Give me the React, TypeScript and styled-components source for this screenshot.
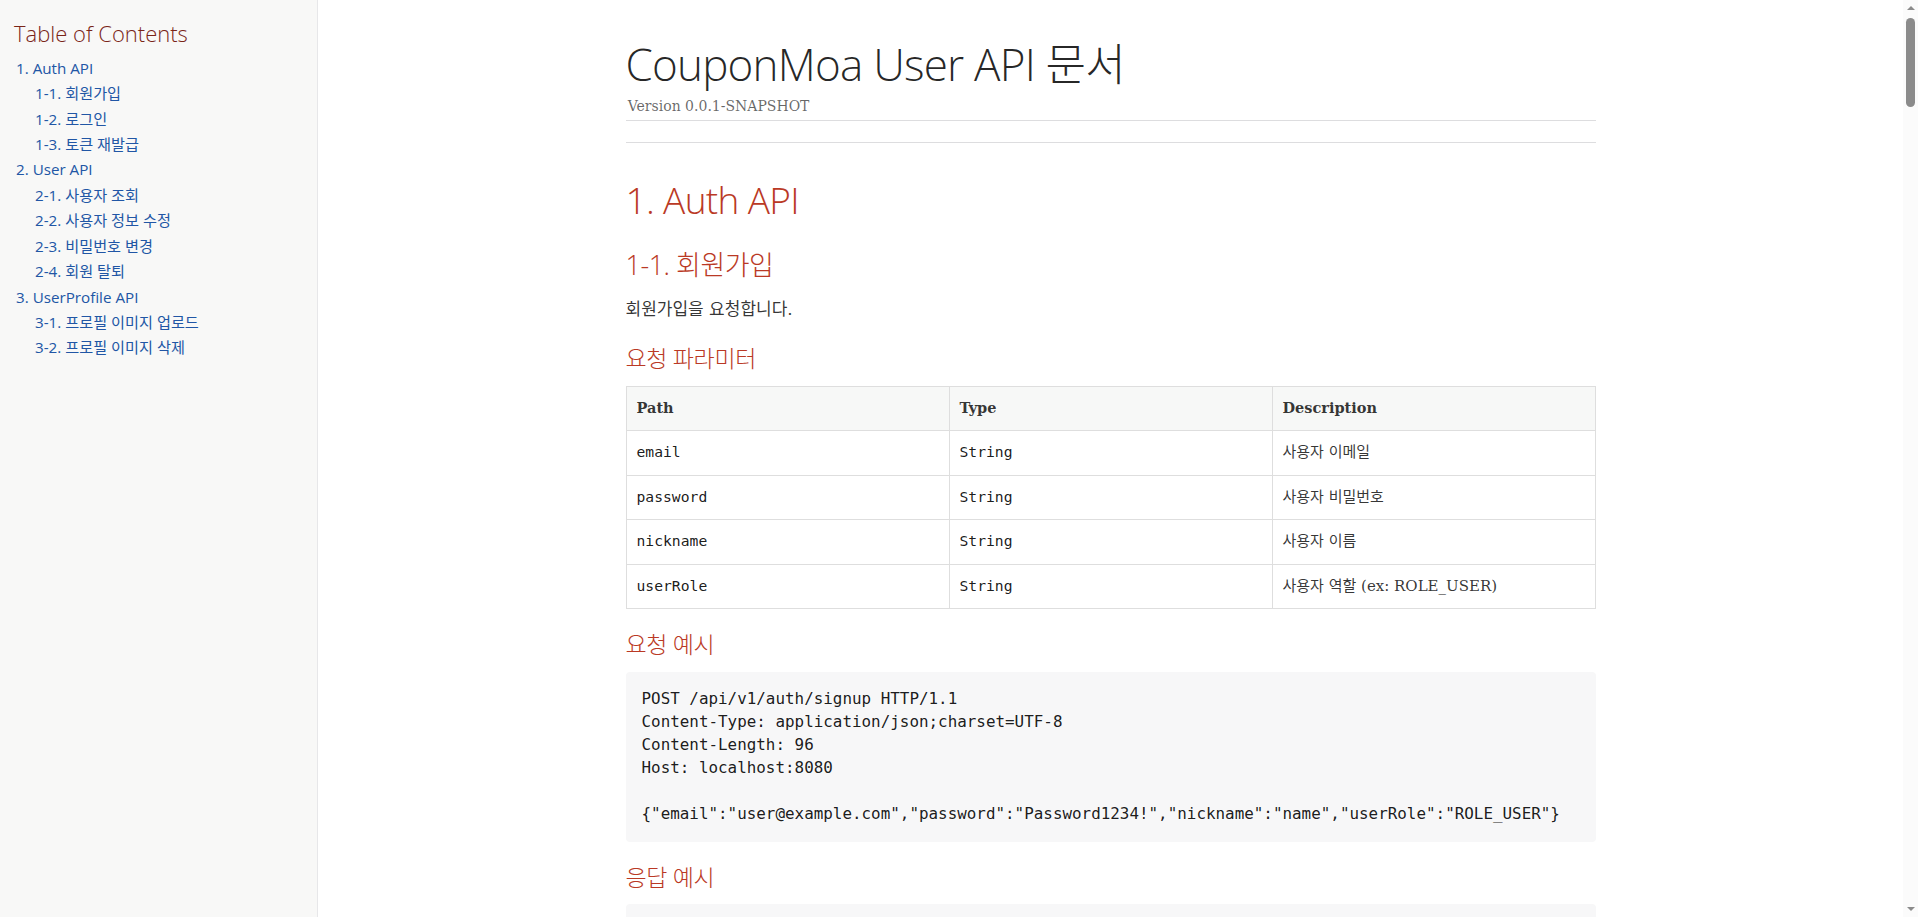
import { FC, useCallback, useEffect, useRef, useState } from 'react';
import styled, { createGlobalStyle } from 'styled-components';

const sans = `"Open Sans", "Noto Sans CJK KR", "DejaVu Sans", sans-serif`;
const serif = `"DejaVu Serif", "Noto Sans CJK KR", serif`;
const mono = `"DejaVu Sans Mono", "Noto Sans CJK KR", monospace`;

type Row = [string, string, string];

interface Sub {
    num: string;
    title: string;
    desc: string;
    params?: Row[];
    request: string;
    response: string;
    fields?: Row[];
}

interface Section {
    num: string;
    title: string;
    subs: Sub[];
}

const bytes = (s: string) => new TextEncoder().encode(s).length;

const request = (method: string, path: string, body?: string, auth = false) => {
    const lines = [`${method} ${path} HTTP/1.1`];
    if (body) {
        lines.push('Content-Type: application/json;charset=UTF-8', `Content-Length: ${bytes(body)}`);
    }
    if (auth) {
        lines.push('Authorization: Bearer eyJhbGciOiJIUzI1NiJ9.eyJzdWIiOiJ1c2VyQGV4YW1wbGUuY29tIn0.access');
    }
    lines.push('Host: localhost:8080');
    return body ? `${lines.join('\n')}\n\n${body}` : lines.join('\n');
};

const response = (body: string) =>
    `HTTP/1.1 200 OK\nContent-Type: application/json\nContent-Length: ${bytes(body)}\n\n${body}`;

const baseFields: Row[] = [
    ['code', 'Number', '응답 코드'],
    ['message', 'String', '응답 메시지'],
];

const userFields: Row[] = [
    ...baseFields,
    ['data.id', 'Number', '사용자 ID'],
    ['data.email', 'String', '사용자 이메일'],
    ['data.nickname', 'String', '사용자 이름'],
    ['data.userRole', 'String', '사용자 역할'],
    ['data.profileImageUrl', 'String', '프로필 이미지 URL'],
];

const userJson =
    '{"code":200,"message":"OK","data":{"id":1,"email":"user@example.com","nickname":"name","userRole":"ROLE_USER","profileImageUrl":null}}';

const sections: Section[] = [
    {
        num: '1',
        title: 'Auth API',
        subs: [
            {
                num: '1-1',
                title: '회원가입',
                desc: '회원가입을 요청합니다.',
                params: [
                    ['email', 'String', '사용자 이메일'],
                    ['password', 'String', '사용자 비밀번호'],
                    ['nickname', 'String', '사용자 이름'],
                    ['userRole', 'String', '사용자 역할 (ex: ROLE_USER)'],
                ],
                request: request(
                    'POST',
                    '/api/v1/auth/signup',
                    '{"email":"user@example.com","password":"Password1234!","nickname":"name","userRole":"ROLE_USER"}'
                ),
                response: response('{"code":200,"message":"회원가입이 완료되었습니다.","data":null}'),
                fields: baseFields,
            },
            {
                num: '1-2',
                title: '로그인',
                desc: '로그인을 요청합니다.',
                params: [
                    ['email', 'String', '사용자 이메일'],
                    ['password', 'String', '사용자 비밀번호'],
                ],
                request: request('POST', '/api/v1/auth/login', '{"email":"user@example.com","password":"Password1234!"}'),
                response: response(
                    '{"code":200,"message":"OK","data":{"accessToken":"eyJhbGciOiJIUzI1NiJ9.access","refreshToken":"eyJhbGciOiJIUzI1NiJ9.refresh"}}'
                ),
                fields: [
                    ...baseFields,
                    ['data.accessToken', 'String', '액세스 토큰'],
                    ['data.refreshToken', 'String', '리프레시 토큰'],
                ],
            },
            {
                num: '1-3',
                title: '토큰 재발급',
                desc: '리프레시 토큰으로 액세스 토큰을 재발급합니다.',
                params: [['refreshToken', 'String', '리프레시 토큰']],
                request: request('POST', '/api/v1/auth/reissue', '{"refreshToken":"eyJhbGciOiJIUzI1NiJ9.refresh"}'),
                response: response(
                    '{"code":200,"message":"OK","data":{"accessToken":"eyJhbGciOiJIUzI1NiJ9.access","refreshToken":"eyJhbGciOiJIUzI1NiJ9.refresh"}}'
                ),
                fields: [
                    ...baseFields,
                    ['data.accessToken', 'String', '새 액세스 토큰'],
                    ['data.refreshToken', 'String', '새 리프레시 토큰'],
                ],
            },
        ],
    },
    {
        num: '2',
        title: 'User API',
        subs: [
            {
                num: '2-1',
                title: '사용자 조회',
                desc: '로그인한 사용자의 정보를 조회합니다.',
                request: request('GET', '/api/v1/users/me', undefined, true),
                response: response(userJson),
                fields: userFields,
            },
            {
                num: '2-2',
                title: '사용자 정보 수정',
                desc: '사용자 정보를 수정합니다.',
                params: [['nickname', 'String', '변경할 사용자 이름']],
                request: request('PATCH', '/api/v1/users/me', '{"nickname":"newName"}', true),
                response: response(userJson.replace('"name"', '"newName"')),
                fields: userFields,
            },
            {
                num: '2-3',
                title: '비밀번호 변경',
                desc: '사용자 비밀번호를 변경합니다.',
                params: [
                    ['currentPassword', 'String', '현재 비밀번호'],
                    ['newPassword', 'String', '새 비밀번호'],
                ],
                request: request(
                    'PATCH',
                    '/api/v1/users/me/password',
                    '{"currentPassword":"Password1234!","newPassword":"NewPassword1234!"}',
                    true
                ),
                response: response('{"code":200,"message":"비밀번호가 변경되었습니다.","data":null}'),
                fields: baseFields,
            },
            {
                num: '2-4',
                title: '회원 탈퇴',
                desc: '회원 탈퇴를 요청합니다.',
                request: request('DELETE', '/api/v1/users/me', undefined, true),
                response: response('{"code":200,"message":"회원 탈퇴가 완료되었습니다.","data":null}'),
                fields: baseFields,
            },
        ],
    },
    {
        num: '3',
        title: 'UserProfile API',
        subs: [
            {
                num: '3-1',
                title: '프로필 이미지 업로드',
                desc: '프로필 이미지를 업로드합니다.',
                params: [['image', 'MultipartFile', '업로드할 이미지 파일']],
                request:
                    'POST /api/v1/users/me/profile-image HTTP/1.1\nContent-Type: multipart/form-data;charset=UTF-8; boundary=6o2knFse3p53ty9dmcQvWAIx1zInP11uCfbm\nAuthorization: Bearer eyJhbGciOiJIUzI1NiJ9.access\nHost: localhost:8080\n\n--6o2knFse3p53ty9dmcQvWAIx1zInP11uCfbm\nContent-Disposition: form-data; name=image; filename=profile.png\nContent-Type: image/png\n\n<<png data>>\n--6o2knFse3p53ty9dmcQvWAIx1zInP11uCfbm--',
                response: response(
                    '{"code":200,"message":"OK","data":{"profileImageUrl":"https://cdn.couponmoa.com/profile/1/profile.png"}}'
                ),
                fields: [...baseFields, ['data.profileImageUrl', 'String', '업로드된 이미지 URL']],
            },
            {
                num: '3-2',
                title: '프로필 이미지 삭제',
                desc: '프로필 이미지를 삭제합니다.',
                request: request('DELETE', '/api/v1/users/me/profile-image', undefined, true),
                response: response('{"code":200,"message":"프로필 이미지가 삭제되었습니다.","data":null}'),
                fields: baseFields,
            },
        ],
    },
];

const GlobalStyle = createGlobalStyle`
    *, *::before, *::after {
        box-sizing: border-box;
    }
    html, body {
        margin: 0;
        padding: 0;
        height: 100%;
        overflow: hidden;
        background: #fff;
    }
    body {
        color: rgba(0, 0, 0, 0.8);
        font-family: ${serif};
        line-height: 1;
    }
`;

const Page = styled.div`
    display: grid;
    grid-template-columns: 318px minmax(0, 1fr) 15px;
    height: 100vh;
`;

const Sidebar = styled.aside`
    overflow: auto;
    background: #f8f8f7;
    border-right: 1px solid #e7e7e9;
    padding: 20px 14px;
`;

const TocTitle = styled.div`
    margin: 0 0 11.4px;
    font-family: ${sans};
    font-weight: 300;
    font-size: 22px;
    line-height: 26.4px;
    color: #7a2518;
`;

const TocList = styled.ul<{ $nested?: boolean }>`
    list-style: none;
    margin: 0 0 0 ${(p) => (p.$nested ? 0 : 2)}px;
    padding: 0 0 0 ${(p) => (p.$nested ? 19 : 0)}px;
    font-family: ${sans};
    font-size: ${(p) => (p.$nested ? '1em' : '15.2px')};
`;

const TocItem = styled.li`
    margin-top: 5.17px;
    line-height: 20.27px;
`;

const TocLink = styled.a`
    color: #2156a5;
    text-decoration: none;
`;

const Main = styled.main`
    overflow-y: auto;
    scrollbar-width: none;

    &::-webkit-scrollbar {
        display: none;
    }
`;

const ScrollRail = styled.div`
    display: flex;
    flex-direction: column;
    background: #fbfbfb;
`;

const RailButton = styled.div<{ $down?: boolean }>`
    flex: none;
    height: 17px;
    display: flex;
    justify-content: center;
    align-items: ${(p) => (p.$down ? 'flex-start' : 'flex-end')};
    padding: ${(p) => (p.$down ? '7px 0 0' : '0 0 7px')};

    &::before {
        content: '';
        width: 0;
        height: 0;
        border-left: 4px solid transparent;
        border-right: 4px solid transparent;
        ${(p) => (p.$down ? 'border-top' : 'border-bottom')}: 4px solid #8b8b8b;
    }
`;

const RailTrack = styled.div`
    flex: 1;
    position: relative;
`;

const RailThumb = styled.div`
    position: absolute;
    left: 3px;
    right: 3px;
    border-radius: 5px;
    background: #8b8b8b;
`;

const Content = styled.div`
    max-width: 1000px;
    margin: 0 auto;
    padding: 0 15px 64px;
`;

const Header = styled.header`
    border-bottom: 1px solid #dddddf;
    padding-bottom: 21px;
`;

const Title = styled.h1`
    margin: 36px 0 0;
    font-family: ${sans};
    font-weight: 300;
    font-size: 44px;
    line-height: 56px;
    letter-spacing: -0.018em;
    color: rgba(0, 0, 0, 0.85);
`;

const Details = styled.div`
    display: flex;
    flex-flow: row wrap;
    border-bottom: 1px solid #dddddf;
    padding: 4px 0 4px 4px;
    font-size: 14px;
    line-height: 1.45;
    color: rgba(0, 0, 0, 0.6);

    span {
        margin-left: -0.125em;
    }
`;

const Sect1 = styled.section`
    & + & {
        margin-top: 20px;
        border-top: 1px solid #e7e7e9;
    }
`;

const SectionTitle = styled.h2`
    margin: 35px 0 0;
    font-family: ${sans};
    font-weight: 300;
    font-size: 37px;
    line-height: 44.4px;
    letter-spacing: -0.018em;
    color: #ba3925;
`;

const SubTitle = styled.h3`
    margin: 26.5px 0 0;
    font-family: ${sans};
    font-weight: 300;
    font-size: 27px;
    line-height: 32.4px;
    letter-spacing: -0.018em;
    color: #ba3925;
`;

const Paragraph = styled.p`
    margin: 14.3px 0 0;
    font-size: 17px;
    line-height: 27.2px;
`;

const BlockTitle = styled.h4`
    margin: 22px 0 0;
    font-family: ${sans};
    font-weight: 300;
    font-size: 23px;
    line-height: 27.6px;
    letter-spacing: -0.015em;
    color: #ba3925;
`;

const Table = styled.table`
    width: 100%;
    margin-top: 12.8px;
    border-collapse: collapse;
    table-layout: fixed;
    border: 1px solid #dedede;
    background: #fff;
`;

const Th = styled.th`
    padding: 8px 10px 10px;
    border: 1px solid #dedede;
    background: #f7f8f7;
    text-align: left;
    font-weight: 700;
    font-size: 14.5px;
    line-height: 25.6px;
    color: rgba(0, 0, 0, 0.8);
`;

const Td = styled.td`
    padding: 9px 10px;
    border: 1px solid #dedede;
    font-size: 15px;
    line-height: 25.6px;
    color: rgba(0, 0, 0, 0.8);
    vertical-align: top;
`;

const Code = styled.code`
    font-family: ${mono};
    font-size: 14.7px;
    line-height: 1;
    color: rgba(0, 0, 0, 0.9);
`;

const Listing = styled.pre`
    margin: 13px 0 0;
    padding: 16px;
    background: #f7f7f8;
    border-radius: 4px;
    font-family: ${mono};
    font-size: 15.9px;
    line-height: 22.93px;
    color: rgba(0, 0, 0, 0.9);
    white-space: pre-wrap;
    word-wrap: break-word;
`;

const FieldTable: FC<{ rows: Row[] }> = ({ rows }) => (
    <Table>
        <thead>
            <tr>
                <Th>Path</Th>
                <Th>Type</Th>
                <Th>Description</Th>
            </tr>
        </thead>
        <tbody>
            {rows.map(([path, type, desc]) => (
                <tr key={path}>
                    <Td>
                        <Code>{path}</Code>
                    </Td>
                    <Td>
                        <Code>{type}</Code>
                    </Td>
                    <Td>{desc}</Td>
                </tr>
            ))}
        </tbody>
    </Table>
);

const Toc: FC = () => (
    <Sidebar>
        <TocTitle>Table of Contents</TocTitle>
        <TocList>
            {sections.map((s) => (
                <TocItem key={s.num}>
                    <TocLink href={`#_${s.num}`}>
                        {s.num}. {s.title}
                    </TocLink>
                    <TocList $nested>
                        {s.subs.map((sub) => (
                            <TocItem key={sub.num}>
                                <TocLink href={`#_${sub.num}`}>
                                    {sub.num}. {sub.title}
                                </TocLink>
                            </TocItem>
                        ))}
                    </TocList>
                </TocItem>
            ))}
        </TocList>
    </Sidebar>
);

const Document: FC = () => (
    <Content>
        <Header>
            <Title>CouponMoa User API 문서</Title>
            <Details>
                <span>Version 0.0.1-SNAPSHOT</span>
            </Details>
        </Header>
        {sections.map((s) => (
            <Sect1 key={s.num} id={`_${s.num}`}>
                <SectionTitle>
                    {s.num}. {s.title}
                </SectionTitle>
                {s.subs.map((sub) => (
                    <div key={sub.num} id={`_${sub.num}`}>
                        <SubTitle>
                            {sub.num}. {sub.title}
                        </SubTitle>
                        <Paragraph>{sub.desc}</Paragraph>
                        {sub.params && (
                            <>
                                <BlockTitle>요청 파라미터</BlockTitle>
                                <FieldTable rows={sub.params} />
                            </>
                        )}
                        <BlockTitle>요청 예시</BlockTitle>
                        <Listing>{sub.request}</Listing>
                        <BlockTitle>응답 예시</BlockTitle>
                        <Listing>{sub.response}</Listing>
                        {sub.fields && (
                            <>
                                <BlockTitle>응답 필드</BlockTitle>
                                <FieldTable rows={sub.fields} />
                            </>
                        )}
                    </div>
                ))}
            </Sect1>
        ))}
    </Content>
);

const App: FC = () => {
    const mainRef = useRef<HTMLElement>(null);
    const trackRef = useRef<HTMLDivElement>(null);
    const [thumb, setThumb] = useState({ top: 1, height: 88 });

    const update = useCallback(() => {
        const main = mainRef.current;
        const track = trackRef.current;
        if (!main || !track) return;
        const trackH = track.clientHeight;
        const ratio = main.clientHeight / main.scrollHeight;
        const height = Math.max(24, Math.round(trackH * ratio));
        const maxScroll = main.scrollHeight - main.clientHeight || 1;
        const top = 1 + (main.scrollTop / maxScroll) * (trackH - height - 2);
        setThumb({ top, height });
    }, []);

    useEffect(() => {
        update();
        const raf = requestAnimationFrame(update);
        window.addEventListener('resize', update);
        return () => {
            cancelAnimationFrame(raf);
            window.removeEventListener('resize', update);
        };
    }, [update]);

    return (
        <>
            <GlobalStyle />
            <Page>
                <Toc />
                <Main ref={mainRef} onScroll={update}>
                    <Document />
                </Main>
                <ScrollRail>
                    <RailButton />
                    <RailTrack ref={trackRef}>
                        <RailThumb style={{ top: thumb.top, height: thumb.height }} />
                    </RailTrack>
                    <RailButton $down />
                </ScrollRail>
            </Page>
        </>
    );
};

export default App;
